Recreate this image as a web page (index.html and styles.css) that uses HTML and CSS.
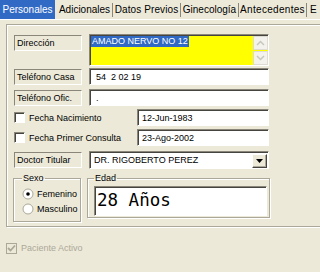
FILE: index.html
```html
<!DOCTYPE html>
<html lang="es">
<head>
  <meta charset="UTF-8">
  <title>Paciente</title>
  <link rel="stylesheet" href="styles.css">
</head>
<body>
  <div class="tabs">
    <span class="tab active t1">Personales</span>
    <span class="tab t2">Adicionales</span>
    <span class="tab t3">Datos Previos</span>
    <span class="tab t4">Ginecología</span>
    <span class="tab t5">Antecedentes</span>
    <span class="tab last">E</span>
  </div>

  <div class="page">
    <div class="frame">
      <div class="row">
        <span class="label">Dirección</span>
        <div class="field memo">
          <span class="sel">AMADO NERVO NO 12</span>
          <div class="scroll">
            <span class="sbtn"><svg width="9" height="6" viewBox="0 0 9 6"><path d="M1 5 L4.5 1.5 L8 5" fill="none" stroke="#c9c7bd" stroke-width="1.5"/></svg></span>
            <span class="sbtn"><svg width="9" height="6" viewBox="0 0 9 6"><path d="M1 1 L4.5 4.5 L8 1" fill="none" stroke="#c9c7bd" stroke-width="1.5"/></svg></span>
          </div>
        </div>
      </div>

      <div class="row r2">
        <span class="label">Teléfono Casa</span>
        <div class="field wide">54&nbsp; 2 02 19</div>
      </div>

      <div class="row r3">
        <span class="label">Teléfono Ofic.</span>
        <div class="field wide">.</div>
      </div>

      <div class="row r4">
        <span class="check"><span class="box"></span>Fecha Nacimiento</span>
        <div class="field date">12-Jun-1983</div>
      </div>

      <div class="row r5">
        <span class="check"><span class="box"></span>Fecha Primer Consulta</span>
        <div class="field date">23-Ago-2002</div>
      </div>

      <div class="row r6">
        <span class="label">Doctor Titular</span>
        <div class="field combo">
          <span class="ctext">DR. RIGOBERTO PEREZ</span>
          <span class="dbtn"><svg width="7" height="4" viewBox="0 0 7 4"><path d="M0 0 H7 L3.5 4 Z" fill="#000"/></svg></span>
        </div>
      </div>

      <div class="groups">
        <fieldset class="group sexo">
          <legend>Sexo</legend>
          <div class="radio"><svg width="12" height="12" viewBox="0 0 12 12"><circle cx="6" cy="6" r="5" fill="#fff" stroke="#aca899"/><circle cx="6" cy="6" r="1.8" fill="#000"/></svg>Femenino</div>
          <div class="radio"><svg width="12" height="12" viewBox="0 0 12 12"><circle cx="6" cy="6" r="5" fill="#fff" stroke="#aca899"/></svg>Masculino</div>
        </fieldset>
        <fieldset class="group edad">
          <legend>Edad</legend>
          <div class="age">28 Años</div>
        </fieldset>
      </div>
    </div>

    <div class="activo">
      <span class="box checked"><svg width="9" height="9" viewBox="0 0 9 9"><path d="M1 4 L3.5 6.5 L8 1.5" fill="none" stroke="#aca899" stroke-width="1.8"/></svg></span>Paciente Activo
    </div>
  </div>
</body>
</html>
```

FILE: styles.css
```css
body { margin: 0; width: 320px; height: 272px; overflow: hidden; background: #ece9d8; font-family: "Liberation Sans", Arial, sans-serif; font-size: 9px; color: #000; }

.tabs { display: flex; align-items: center; height: 19px; font-size: 10px; white-space: nowrap; overflow: hidden; }
.tab { box-sizing: border-box; text-align: center; line-height: 14px; border-right: 1px solid #8a877a; flex: none; }
.tab.active { background: #316ac5; color: #fff; line-height: 19px; margin-right: 2px; border-right: none; }
.t1 { width: 55px; }
.t2 { width: 56px; }
.t3 { width: 68px; letter-spacing: 0.1px; }
.t4 { width: 58px; }
.t5 { width: 68px; letter-spacing: 0.3px; }
.tab.last { border-right: none; padding-left: 3px; }

.page { border-top: 1px solid #fff; padding: 4px 0 0 6px; }
.frame { width: 306px; height: 192px; padding: 9px 0 0 7px; border: 1px solid #aca899; box-shadow: inset 1px 1px #fff, 1px 1px #fff; }

.row { display: flex; align-items: flex-start; gap: 7px; }
.r2 { margin-top: 2px; }
.r3 { margin-top: 4px; }
.r4 { margin-top: 3px; }
.r5 { margin-top: 3px; }
.r6 { margin-top: 5px; }

.label { width: 64px; height: 14px; line-height: 14px; padding-left: 2px; margin-top: 1px; border: 1px solid; border-color: #8a877a #fff #fff #8a877a; }

.field { box-sizing: border-box; background: #fff; border: 1px solid; border-color: #8a877a #fff #fff #8a877a; box-shadow: inset 1px 1px #45443e; padding: 2px 0 0 4px; height: 17px; line-height: 12px; }
.wide { width: 180px; padding-left: 6px; }
.memo { width: 180px; height: 32px; background: #ffff00; padding: 1px 0 0 1px; display: flex; justify-content: space-between; }
.sel { background: #316ac5; color: #fff; height: 11px; line-height: 11px; padding: 0 1px; }
.scroll { width: 15px; display: flex; flex-direction: column; gap: 1px; }
.sbtn { box-sizing: border-box; height: 14px; display: flex; align-items: center; justify-content: center; background: #f3f2ec; border: 1px solid #dedcd2; }

.check { display: flex; align-items: center; width: 116px; height: 17px; }
.box { box-sizing: border-box; width: 11px; height: 11px; margin-right: 4px; background: #fff; border: 1px solid; border-color: #8a877a #fff #fff #8a877a; box-shadow: inset 1px 1px #45443e; }
.date { width: 132px; }

.combo { width: 180px; height: 18px; display: flex; justify-content: space-between; padding: 2px 1px 0 4px; }
.ctext { line-height: 12px; }
.dbtn { box-sizing: border-box; width: 15px; height: 14px; display: flex; align-items: center; justify-content: center; background: #ece9d8; border: 1px solid; border-color: #fff #45443e #45443e #fff; box-shadow: inset -1px -1px #aca899; }

.groups { display: flex; gap: 6px; margin: 4px 0 0 -1px; align-items: flex-start; }
.group { margin: 0; min-width: 0; border: 1px solid #aca899; box-shadow: inset 1px 1px #fff, 1px 1px #fff; }
.group legend { padding: 0 1px; line-height: 11px; }
.sexo { width: 58px; height: 45px; padding: 2px 0 0 8px; }
.edad { width: 175px; height: 41px; padding: 2px 0 0 6px; }
.radio { display: flex; align-items: center; height: 15px; }
.radio svg { margin-right: 3px; }
.age { box-sizing: border-box; width: 173px; height: 30px; background: #fff; border: 1px solid; border-color: #8a877a #fff #fff #8a877a; box-shadow: inset 1px 1px #45443e; font-family: "DejaVu Sans Mono", monospace; font-size: 17.5px; line-height: 27px; padding-left: 2px; }

.activo { display: flex; align-items: center; margin-top: 15px; color: #aca899; height: 12px; }
.activo .box { background: #ece9d8; display: flex; align-items: center; justify-content: center; border-color: #aca899; box-shadow: none; }
```
